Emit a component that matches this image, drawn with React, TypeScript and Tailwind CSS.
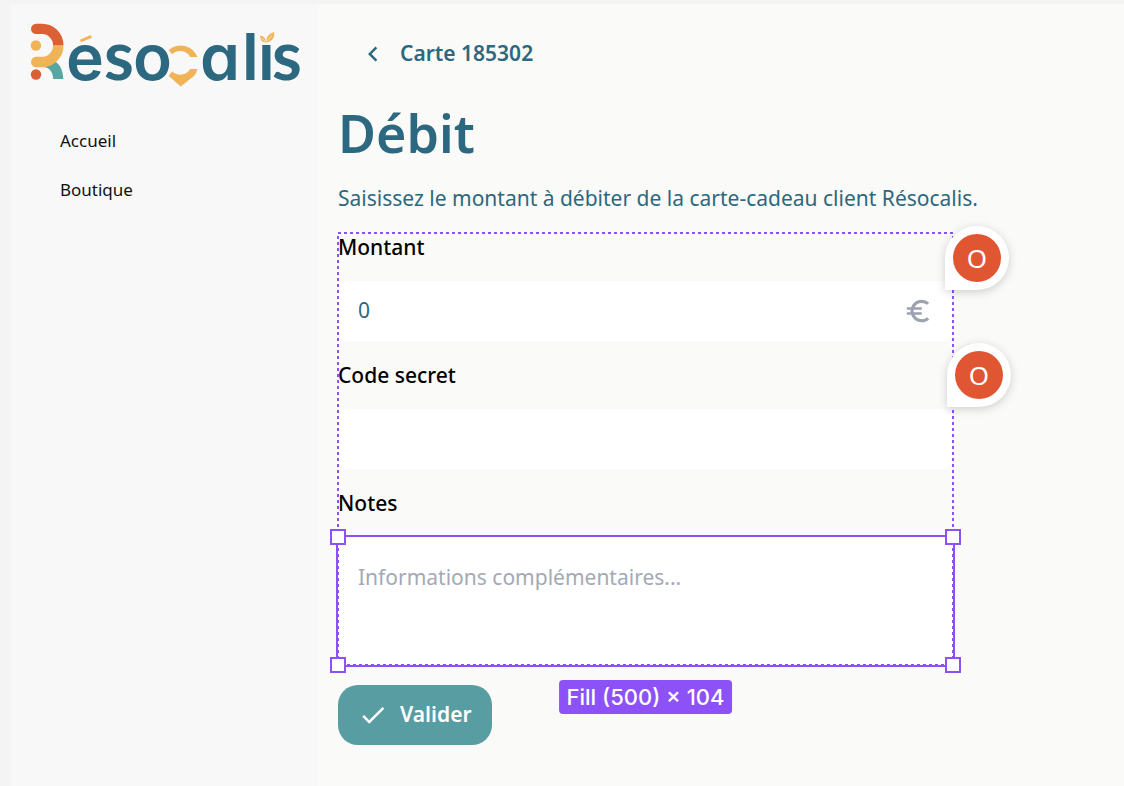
import type { ReactNode } from "react";
import { MdCheck, MdChevronLeft, MdEuroSymbol } from "react-icons/md";

function Logo() {
  return (
    <svg
      viewBox="31 20 270 70"
      className="h-[70px] w-[270px] overflow-visible"
      role="img"
      aria-label="Résocalis"
    >
      <path d="M44 67.3C50 67.5 53 73 53.2 79H63.3C63 71 60.500 65.500 56 62Z" fill="#57a6a2" />
      <path d="M36 62H42A16.500 16.500 0 0 0 58.300 45.300" fill="none" stroke="#f0b357" strokeWidth="10.400" />
      <path d="M36 28.900H42A16.400 16.400 0 0 1 58.300 45.300" fill="none" stroke="#db6035" strokeWidth="10.400" />
      <circle cx="36.200" cy="28.900" r="5.200" fill="#db6035" />
      <circle cx="36.200" cy="62" r="5.200" fill="#f0b357" />
      <circle cx="35.900" cy="45.500" r="5.200" fill="#f0b357" />
      <circle cx="36" cy="74.500" r="5.200" fill="#db6035" />
      <path d="M80.500 41L91.300 36.300" stroke="#f0b357" strokeWidth="2.900" />
      <path
        d="M168.700 50A18 18 0 0 1 197.500 57H190.300A11.700 11.700 0 0 0 172 54.200ZM172 71.500A12 12 0 0 0 190.300 69H197.500Q196.500 73 194.300 75.700L180.700 86.500L168.700 76Z"
        fill="#f0b357"
      />
      <g
        fill="#2c687f"
        fontSize="64"
        className="font-['Inter',sans-serif] font-semibold [font-feature-settings:'cv11']"
      >
        <text x="66" y="80">e</text>
        <text x="133" y="80">o</text>
        <text x="200" y="80">a</text>
        <text x="242 258" y="80">lı</text>
      </g>
      <g fill="#2c687f" fontSize="68" className="font-['Lato',sans-serif] font-bold">
        <text x="104" y="80">s</text>
        <text x="272" y="80">s</text>
      </g>
      <path d="M260 35.500Q266 36.500 265.800 42.500Q260 42 260 35.500ZM274.300 32Q275 41 266.300 42.800Q266 34 274.300 32Z" fill="#f0b357" />
      <path d="M261.500 37.500L265 41.500M272 35L267.300 41" stroke="#f8f8f8" strokeWidth="0.600" />
    </svg>
  );
}

function Field({ id, label, children }: { id: string; label: string; children: ReactNode }) {
  return (
    <div className="flex flex-col gap-5">
      <label htmlFor={id} className="text-[21px] leading-7 font-medium text-black">
        {label}
      </label>
      {children}
    </div>
  );
}

function CommentPin({ className }: { className: string }) {
  return (
    <button
      type="button"
      className={`absolute flex size-16 items-center justify-center rounded-full rounded-bl-none bg-white shadow-[0_2px_10px_rgba(0,0,0,0.18)] ${className}`}
    >
      <span className="flex size-12 items-center justify-center rounded-full bg-[#e05532] text-[26px] leading-none text-white">
        O
      </span>
    </button>
  );
}

const handles = [
  "-top-2 -left-2",
  "-top-2 -right-2",
  "-bottom-2 -left-2",
  "-bottom-2 -right-2",
];

export default function App() {
  return (
    <div className="flex min-h-screen bg-[#f4f4f4] pt-1 pl-[11px] font-['Noto_Sans',sans-serif] text-[#2c687f]">
      <aside className="w-[307px] shrink-0 bg-[#f8f8f8] pt-4 pl-5">
        <Logo />
        <nav className="mt-[39px] flex flex-col gap-[25px] pl-[29px] text-[17px] leading-6 text-[#111]">
          <a href="#accueil">Accueil</a>
          <a href="#boutique">Boutique</a>
        </nav>
      </aside>

      <main className="min-w-0 flex-1 bg-[#fafaf8] px-5 pt-5">
        <a href="#carte" className="flex h-[60px] w-fit items-center gap-3 px-5 text-[21px] font-semibold">
          <MdChevronLeft className="size-[30px]" />
          Carte 185302
        </a>
        <h1 className="mt-[18px] text-[52px] leading-[62px] font-semibold">Débit</h1>
        <p className="mt-5 text-[21px] leading-7">
          Saisissez le montant à débiter de la carte-cadeau client Résocalis.
        </p>

        <form className="mt-[21px] w-full max-w-[615px]">
          <div className="relative flex flex-col gap-5">
            <Field id="montant" label="Montant">
              <div className="flex h-[60px] items-center rounded-[10px] bg-white px-5">
                <input
                  id="montant"
                  defaultValue="0"
                  className="min-w-0 flex-1 bg-transparent text-[21px] outline-none"
                />
                <MdEuroSymbol className="size-[30px] text-[#9ca3af]" />
              </div>
            </Field>
            <Field id="code" label="Code secret">
              <input
                id="code"
                type="password"
                className="h-[60px] rounded-[10px] bg-white px-5 text-[21px] outline-none"
              />
            </Field>
            <Field id="notes" label="Notes">
              <div className="relative flex h-32">
                <textarea
                  id="notes"
                  placeholder="Informations complémentaires..."
                  className="flex-1 resize-none bg-white px-5 py-[26px] text-[21px] leading-7 outline-none placeholder:text-[#a3a9b5]"
                />
                <div className="pointer-events-none absolute -inset-0.5 border-2 border-[#8c52f8]" />
              </div>
            </Field>

            <svg className="pointer-events-none absolute inset-0 size-full overflow-visible" aria-hidden="true">
              <rect width="100%" height="100%" fill="none" stroke="#8c52f8" strokeWidth="2" strokeDasharray="3 3" />
            </svg>
            <div className="pointer-events-none absolute inset-x-0 bottom-0 h-32">
              {handles.map((place) => (
                <span key={place} className={`absolute size-4 border-2 border-[#8c52f8] bg-white ${place}`} />
              ))}
              <span className="absolute top-full left-1/2 mt-[15px] -translate-x-1/2 rounded-[4px] bg-[#8c52f8] px-2 font-['Inter',sans-serif] text-[22px] leading-[34px] font-medium whitespace-nowrap text-white">
                Fill (500) × 104
              </span>
            </div>
            <CommentPin className="-top-[7px] -right-14" />
            <CommentPin className="top-[110px] -right-[58px]" />
          </div>

          <button
            type="submit"
            className="mt-5 flex h-[60px] items-center gap-3 rounded-[20px] bg-[#579da1] px-5 text-[21px] font-semibold text-white"
          >
            <MdCheck className="size-[30px]" />
            Valider
          </button>
        </form>
      </main>
    </div>
  );
}
